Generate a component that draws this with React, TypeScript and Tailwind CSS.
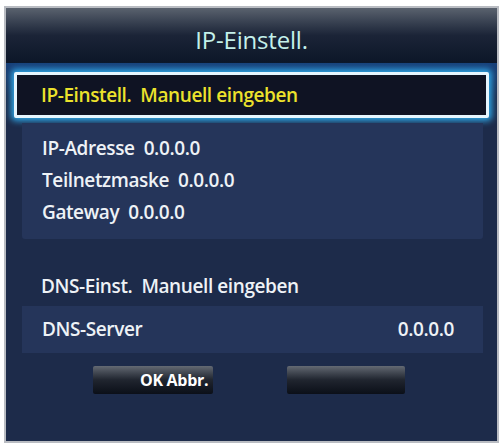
import React from 'react';

const font = { fontFamily: '"Open Sans", "Noto Sans", sans-serif' };

const App = () => {
    const ipRows = [
        { label: 'IP-Adresse', value: '0.0.0.0' },
        { label: 'Teilnetzmaske', value: '0.0.0.0' },
        { label: 'Gateway', value: '0.0.0.0' },
    ];

    return (
        <div className="w-[504px] h-[448px] bg-white pt-[6px] pl-[4px]" style={font}>
            <div className="w-[495px] h-[437px] border-2 border-[#b9bcc2] bg-[#1d2b4a] flex flex-col overflow-hidden">
                {/* header */}
                <div className="h-[55px] shrink-0 bg-gradient-to-b from-[#5a626e] via-[#1b2437] to-[#0c1628] flex items-center justify-center">
                    <span className="text-[24px] text-[#c4f0ea] tracking-[-0.2px] mt-[8px]">IP-Einstell.</span>
                </div>

                <div className="flex-1 bg-gradient-to-b from-[#17407a] via-[#1d2b4a] to-[#1d2b4a] [background-size:100%_70px] bg-no-repeat flex flex-col">
                    {/* focused row */}
                    <div className="mt-[9px] ml-[8px] w-[475px] h-[46px] border-[3px] border-[#e6f6ff] rounded-[2px] bg-[#0f1323] shadow-[0_0_6px_3px_#2fa6e6] flex items-center pl-[24px]">
                        <span className="text-[19px] font-semibold text-[#ece22c] tracking-[-0.4px] whitespace-pre">IP-Einstell.  Manuell eingeben</span>
                    </div>

                    {/* ip group */}
                    <div className="mt-[5px] ml-[16px] w-[461px] pt-[9px] pb-[11px] bg-[#25355a] rounded-b-[3px] flex flex-col">
                        {ipRows.map((r) => (
                            <div key={r.label} className="h-[32px] flex items-center pl-[20px] text-[19px] font-semibold text-[#eef2f6] tracking-[-0.4px] whitespace-pre">
                                {r.label}  {r.value}
                            </div>
                        ))}
                    </div>

                    <div className="mt-[31px] h-[32px] flex items-center pl-[35px] text-[19px] font-semibold text-[#eef2f6] tracking-[-0.4px] whitespace-pre">
                        DNS-Einst.  Manuell eingeben
                    </div>

                    <div className="mt-[4px] ml-[16px] w-[461px] h-[47px] bg-[#25355a] flex items-center justify-between pl-[20px] pr-[29px] text-[19px] font-semibold text-[#eef2f6] tracking-[-0.4px]">
                        <span>DNS-Server</span>
                        <span>0.0.0.0</span>
                    </div>

                    {/* buttons */}
                    <div className="mt-[13px] flex pl-[87px] gap-[74px]">
                        <div className="w-[120px] h-[28px] rounded-[2px] bg-gradient-to-b from-[#646a73] via-[#20252f] to-[#0b0f18] flex items-center pl-[47px]">
                            <span className="text-[16px] font-bold text-white tracking-[-0.3px] whitespace-nowrap">OK Abbr.</span>
                        </div>
                        <div className="w-[118px] h-[28px] rounded-[2px] bg-gradient-to-b from-[#646a73] via-[#20252f] to-[#0b0f18]" />
                    </div>
                </div>
            </div>
        </div>
    );
};

export default App;
